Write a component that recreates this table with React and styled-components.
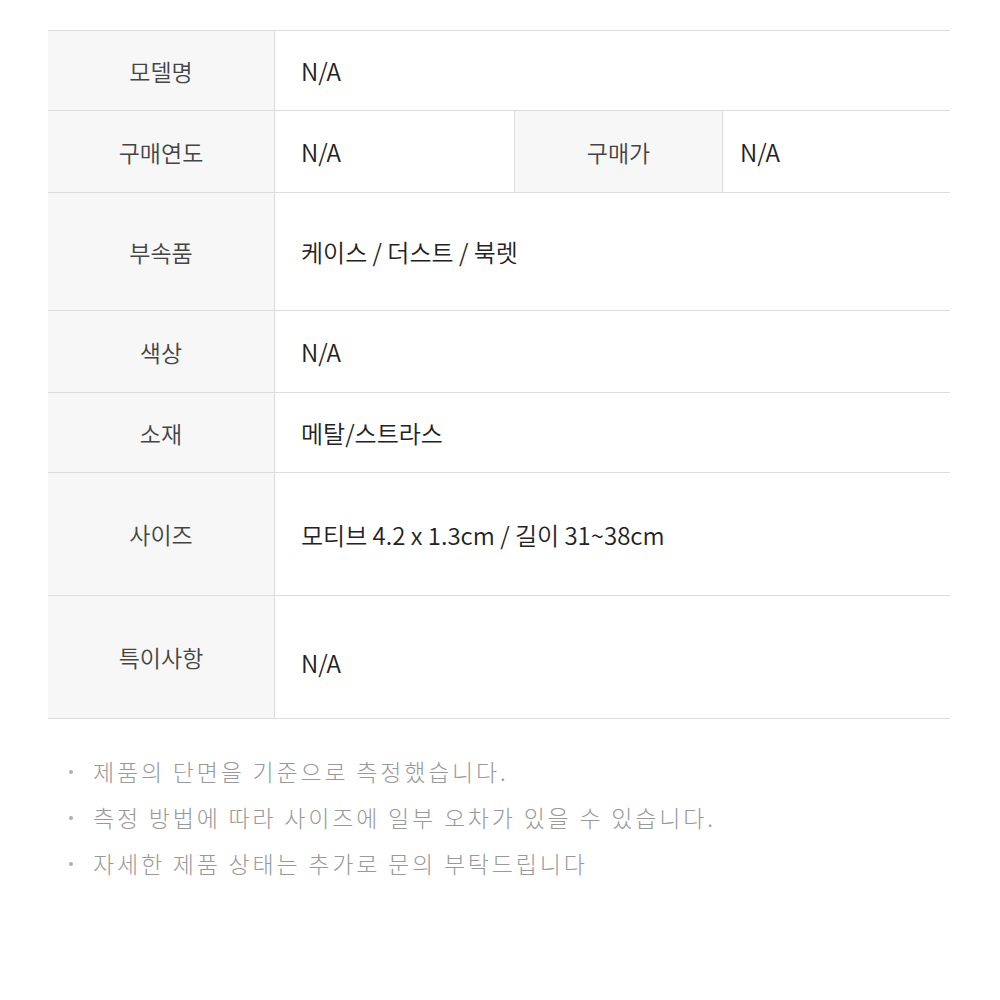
import React from "react";
import styled, { createGlobalStyle } from "styled-components";

const GlobalStyle = createGlobalStyle`
  body {
    margin: 0;
    background: #fff;
    font-family: "Noto Sans CJK KR", "Noto Sans", sans-serif;
  }
`;

const specs = [
  { label: "모델명", value: "N/A", height: 80 },
  {
    label: "구매연도",
    value: "N/A",
    height: 82,
    extra: { label: "구매가", value: "N/A" },
  },
  { label: "부속품", value: "케이스 / 더스트 / 북렛", height: 118 },
  { label: "색상", value: "N/A", height: 82 },
  { label: "소재", value: "메탈/스트라스", height: 80 },
  { label: "사이즈", value: "모티브 4.2 x 1.3cm / 길이 31~38cm", height: 123 },
  { label: "특이사항", value: "N/A", height: 123, drop: 10 },
];

const notes = [
  "제품의 단면을 기준으로 측정했습니다.",
  "측정 방법에 따라 사이즈에 일부 오차가 있을 수 있습니다.",
  "자세한 제품 상태는 추가로 문의 부탁드립니다",
];

const App = () => {
  return (
    <Page>
      <GlobalStyle />
      <SpecTable>
        {specs.map(({ label, value, height, extra, drop }) => (
          <SpecRow key={label} $height={height}>
            <LabelCell $width={227}>{label}</LabelCell>
            {extra ? (
              <>
                <ValueCell $width={239}>{value}</ValueCell>
                <LabelCell $width={209} $bordered>
                  {extra.label}
                </LabelCell>
                <ValueCell $inset={17}>{extra.value}</ValueCell>
              </>
            ) : (
              <ValueCell $drop={drop}>{value}</ValueCell>
            )}
          </SpecRow>
        ))}
      </SpecTable>

      <NoteList>
        {notes.map((note) => (
          <Note key={note}>{note}</Note>
        ))}
      </NoteList>
    </Page>
  );
};

export default App;

const Page = styled.div`
  width: 1000px;
  min-height: 1000px;
  padding: 30px 50px 0 48px;
  box-sizing: border-box;
`;

const SpecTable = styled.div`
  width: 902px;
  border-top: 1px solid #dcdcdc;
`;

const SpecRow = styled.div`
  display: flex;
  height: ${({ $height }) => $height}px;
  border-bottom: 1px solid #dcdcdc;
  box-sizing: border-box;
`;

const LabelCell = styled.div`
  flex: 0 0 ${({ $width }) => $width}px;
  display: flex;
  align-items: center;
  justify-content: center;
  background: #f7f7f7;
  color: #444;
  font-size: 23px;
  font-weight: 350;
  border-right: 1px solid #dcdcdc;
  border-left: ${({ $bordered }) => ($bordered ? "1px solid #dcdcdc" : "none")};
  box-sizing: border-box;
`;

const ValueCell = styled.div`
  flex: ${({ $width }) => ($width ? `0 0 ${$width}px` : "1 1 auto")};
  display: flex;
  align-items: center;
  padding: ${({ $drop }) => ($drop ? `${$drop}px` : "0")} 0 0
    ${({ $inset }) => $inset ?? 26}px;
  color: #222;
  font-size: 24px;
  font-weight: 350;
  box-sizing: border-box;
`;

const NoteList = styled.ul`
  list-style: none;
  margin: 29px 0 0;
  padding: 0;
`;

const Note = styled.li`
  position: relative;
  padding-left: 45px;
  line-height: 46px;
  font-size: 23px;
  font-weight: 300;
  letter-spacing: 2.8px;
  color: #999;

  &::before {
    content: "";
    position: absolute;
    left: 21px;
    top: 22px;
    width: 4px;
    height: 4px;
    border-radius: 50%;
    background: #b0b0b0;
  }
`;
